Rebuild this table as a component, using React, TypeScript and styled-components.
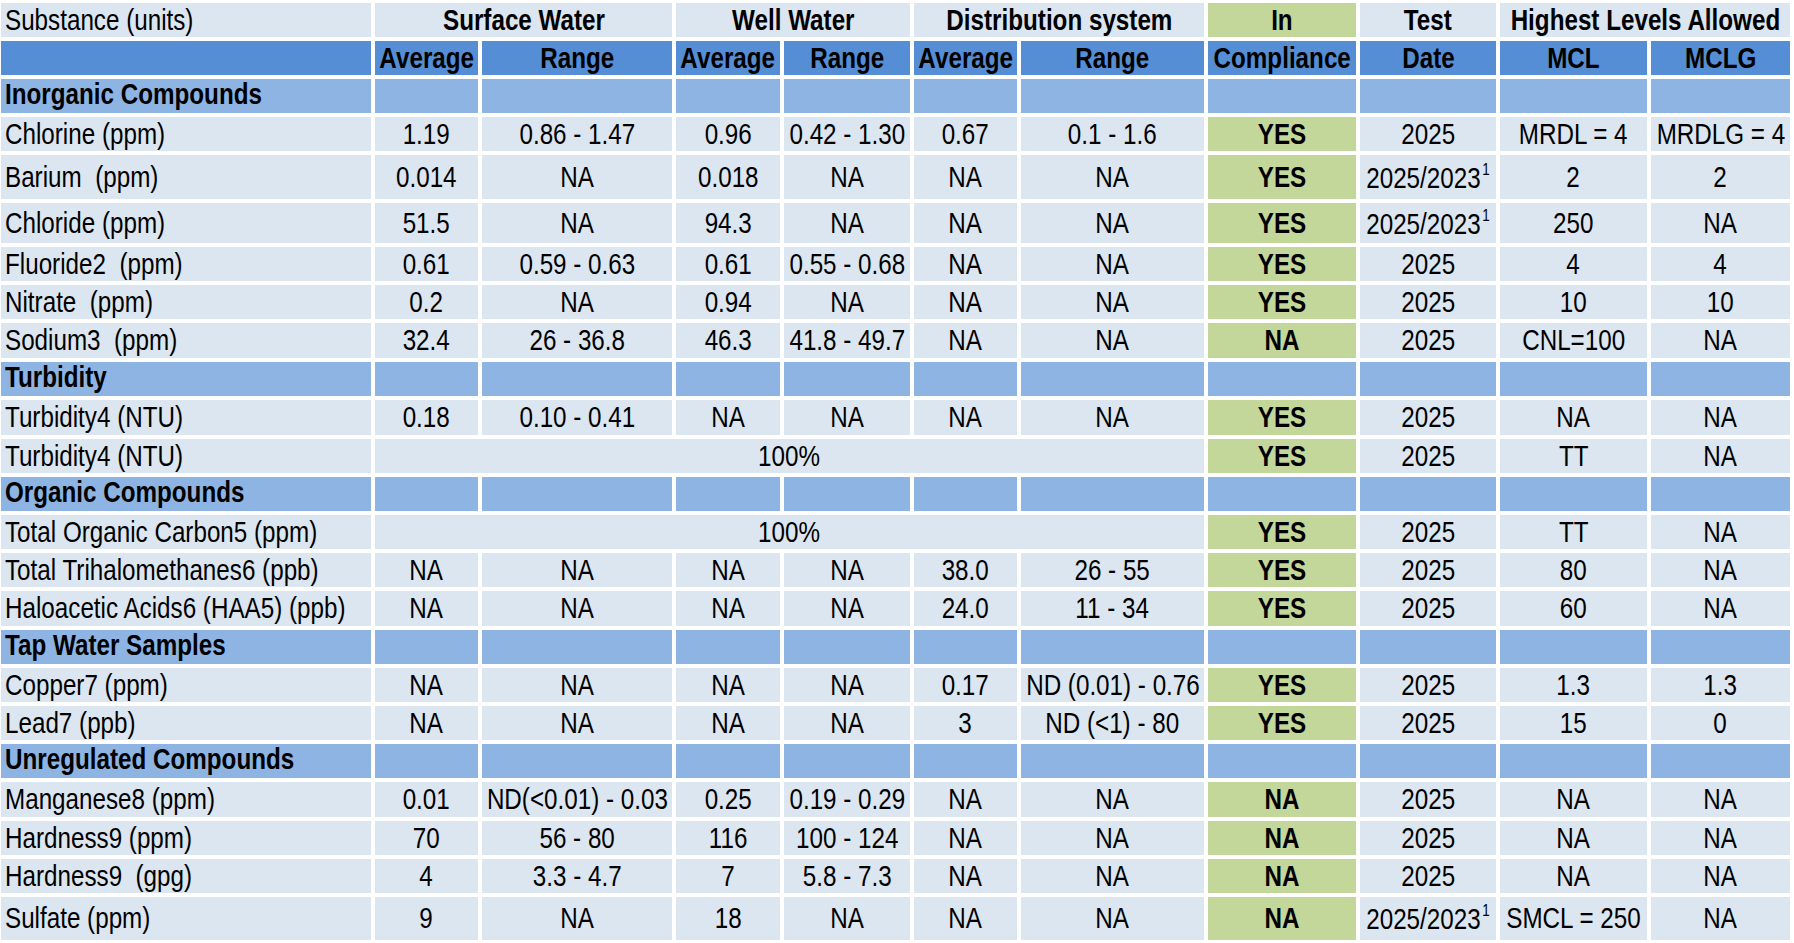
import React from "react";
import styled, { createGlobalStyle } from "styled-components";

const GlobalStyle = createGlobalStyle`
  html, body { margin: 0; padding: 0; background: #ffffff; }
  body {
    font-family: "Liberation Sans Narrow", "Arial Narrow", "Liberation Sans", Arial, sans-serif;
    color: #000;
  }
`;

const COLS = "370px 103px 190px 104px 126px 103px 183px 148px 136px 147px 139px";

type Tone = "plain" | "head" | "section" | "green";
const BG: Record<Tone, string> = {
  plain: "#dce6f1",
  head: "#558ed5",
  section: "#8eb4e3",
  green: "#c4d79b",
};

const Table = styled.div`
  display: flex;
  flex-direction: column;
  gap: 4px;
  padding: 3px 0 0 1px;
  width: 1794px;
  box-sizing: border-box;
`;

const Row = styled.div<{ $h: number }>`
  display: grid;
  grid-template-columns: ${COLS};
  column-gap: 4px;
  height: ${(p) => p.$h}px;
`;

const Cell = styled.div<{ $tone: Tone; $span?: number; $left?: boolean; $bold?: boolean }>`
  grid-column: span ${(p) => p.$span ?? 1};
  background: ${(p) => BG[p.$tone]};
  display: flex;
  align-items: center;
  justify-content: ${(p) => (p.$left ? "flex-start" : "center")};
  padding: 0 ${(p) => (p.$left ? "4px" : "0")};
  padding-bottom: ${(p) => (p.$tone === "section" ? "3px" : "0")};
  font-size: 29px;
  line-height: 1;
  font-weight: ${(p) => (p.$bold ? 700 : 400)};
  overflow: hidden;
  min-width: 0;
`;

/* Arial Narrow is not installed: narrow Liberation Sans horizontally */
const Text = styled.span<{ $left?: boolean }>`
  display: inline-block;
  flex-shrink: 0;
  white-space: pre;
  transform: scaleX(0.835);
  transform-origin: ${(p) => (p.$left ? "left" : "center")} center;
`;

const Sup = styled.span`
  font-size: 16px;
  vertical-align: 13px;
  margin-left: 2px;
`;

type DataRow = {
  kind: "data";
  label: string;
  measures: string[] | "100%";
  comply: string;
  date: string;
  sup?: boolean;
  mcl: string;
  mclg: string;
  h: number;
};
type SectionRow = { kind: "section"; label: string; h: number };
type Item = DataRow | SectionRow;

const d = (
  label: string,
  measures: string[] | "100%",
  comply: string,
  date: string,
  mcl: string,
  mclg: string,
  h = 34,
  sup = false
): DataRow => ({ kind: "data", label, measures, comply, date, mcl, mclg, h, sup });
const s = (label: string, h = 34): SectionRow => ({ kind: "section", label, h });

const rows: Item[] = [
  s("Inorganic Compounds"),
  d("Chlorine (ppm)", ["1.19", "0.86 - 1.47", "0.96", "0.42 - 1.30", "0.67", "0.1 - 1.6"], "YES", "2025", "MRDL = 4", "MRDLG = 4"),
  d("Barium  (ppm)", ["0.014", "NA", "0.018", "NA", "NA", "NA"], "YES", "2025/2023", "2", "2", 44, true),
  d("Chloride (ppm)", ["51.5", "NA", "94.3", "NA", "NA", "NA"], "YES", "2025/2023", "250", "NA", 40, true),
  d("Fluoride2  (ppm)", ["0.61", "0.59 - 0.63", "0.61", "0.55 - 0.68", "NA", "NA"], "YES", "2025", "4", "4"),
  d("Nitrate  (ppm)", ["0.2", "NA", "0.94", "NA", "NA", "NA"], "YES", "2025", "10", "10"),
  d("Sodium3  (ppm)", ["32.4", "26 - 36.8", "46.3", "41.8 - 49.7", "NA", "NA"], "NA", "2025", "CNL=100", "NA", 35),
  s("Turbidity"),
  d("Turbidity4 (NTU)", ["0.18", "0.10 - 0.41", "NA", "NA", "NA", "NA"], "YES", "2025", "NA", "NA", 35),
  d("Turbidity4 (NTU)", "100%", "YES", "2025", "TT", "NA"),
  s("Organic Compounds"),
  d("Total Organic Carbon5 (ppm)", "100%", "YES", "2025", "TT", "NA"),
  d("Total Trihalomethanes6 (ppb)", ["NA", "NA", "NA", "NA", "38.0", "26 - 55"], "YES", "2025", "80", "NA"),
  d("Haloacetic Acids6 (HAA5) (ppb)", ["NA", "NA", "NA", "NA", "24.0", "11 - 34"], "YES", "2025", "60", "NA", 35),
  s("Tap Water Samples"),
  d("Copper7 (ppm)", ["NA", "NA", "NA", "NA", "0.17", "ND (0.01) - 0.76"], "YES", "2025", "1.3", "1.3"),
  d("Lead7 (ppb)", ["NA", "NA", "NA", "NA", "3", "ND (<1) - 80"], "YES", "2025", "15", "0"),
  s("Unregulated Compounds"),
  d("Manganese8 (ppm)", ["0.01", "ND(<0.01) - 0.03", "0.25", "0.19 - 0.29", "NA", "NA"], "NA", "2025", "NA", "NA", 35),
  d("Hardness9 (ppm)", ["70", "56 - 80", "116", "100 - 124", "NA", "NA"], "NA", "2025", "NA", "NA"),
  d("Hardness9  (gpg)", ["4", "3.3 - 4.7", "7", "5.8 - 7.3", "NA", "NA"], "NA", "2025", "NA", "NA"),
  d("Sulfate (ppm)", ["9", "NA", "18", "NA", "NA", "NA"], "NA", "2025/2023", "SMCL = 250", "NA", 43, true),
];

const groupHeads: { label: string; span: number; tone: Tone }[] = [
  { label: "Surface Water", span: 2, tone: "plain" },
  { label: "Well Water", span: 2, tone: "plain" },
  { label: "Distribution system", span: 2, tone: "plain" },
  { label: "In", span: 1, tone: "green" },
  { label: "Test", span: 1, tone: "plain" },
  { label: "Highest Levels Allowed", span: 2, tone: "plain" },
];

const subHeads = ["Average", "Range", "Average", "Range", "Average", "Range", "Compliance", "Date", "MCL", "MCLG"];

export default function App() {
  return (
    <>
      <GlobalStyle />
      <Table>
        <Row $h={34}>
          <Cell $tone="plain" $left>
            <Text $left>Substance (units)</Text>
          </Cell>
          {groupHeads.map((g) => (
            <Cell key={g.label} $tone={g.tone} $span={g.span} $bold>
              <Text>{g.label}</Text>
            </Cell>
          ))}
        </Row>
        <Row $h={34}>
          <Cell $tone="head" />
          {subHeads.map((h, i) => (
            <Cell key={i} $tone="head" $bold>
              <Text>{h}</Text>
            </Cell>
          ))}
        </Row>
        {rows.map((r, i) =>
          r.kind === "section" ? (
            <Row key={i} $h={r.h}>
              <Cell $tone="section" $left $bold>
                <Text $left>{r.label}</Text>
              </Cell>
              {Array.from({ length: 10 }).map((_, j) => (
                <Cell key={j} $tone="section" />
              ))}
            </Row>
          ) : (
            <Row key={i} $h={r.h}>
              <Cell $tone="plain" $left>
                <Text $left>{r.label}</Text>
              </Cell>
              {r.measures === "100%" ? (
                <Cell $tone="plain" $span={6}>
                  <Text>100%</Text>
                </Cell>
              ) : (
                r.measures.map((m, j) => (
                  <Cell key={j} $tone="plain">
                    <Text>{m}</Text>
                  </Cell>
                ))
              )}
              <Cell $tone="green" $bold>
                <Text>{r.comply}</Text>
              </Cell>
              <Cell $tone="plain">
                <Text>
                  {r.date}
                  {r.sup && <Sup>1</Sup>}
                </Text>
              </Cell>
              <Cell $tone="plain">
                <Text>{r.mcl}</Text>
              </Cell>
              <Cell $tone="plain">
                <Text>{r.mclg}</Text>
              </Cell>
            </Row>
          )
        )}
      </Table>
    </>
  );
}
